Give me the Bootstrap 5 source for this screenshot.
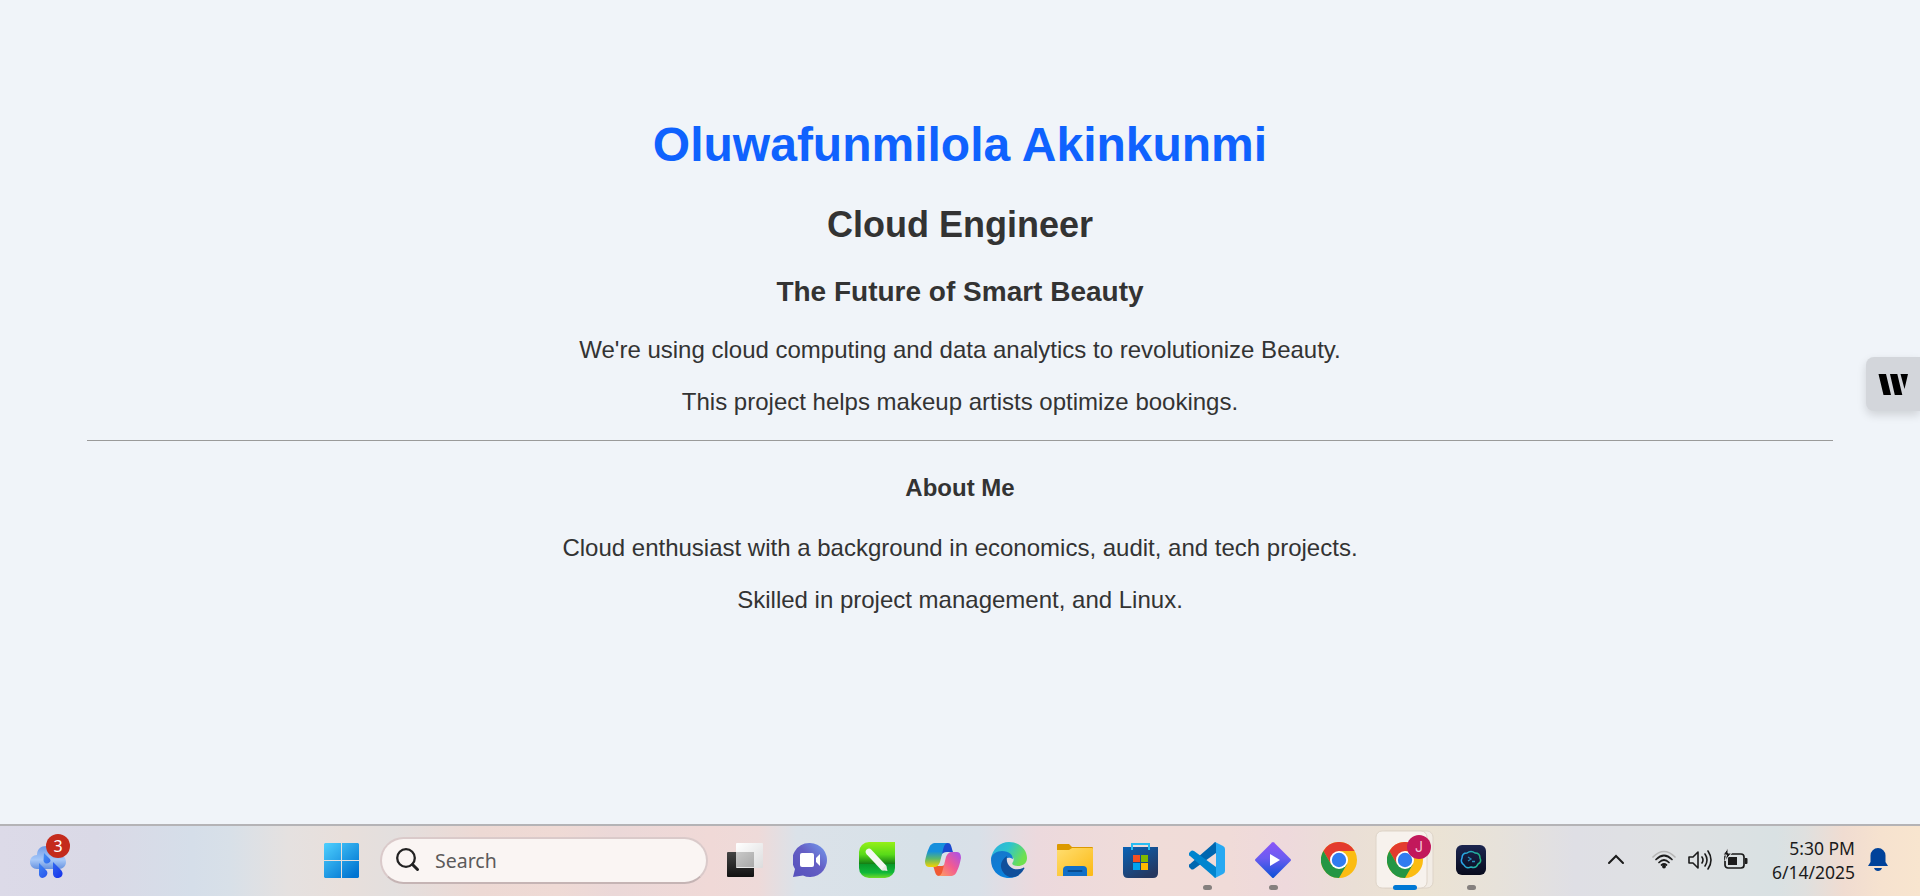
<!DOCTYPE html>
<html lang="en">
<head>
<meta charset="utf-8">
<title>Oluwafunmilola Akinkunmi</title>
<link href="https://cdn.jsdelivr.net/npm/bootstrap@5.3.0/dist/css/bootstrap.min.css" rel="stylesheet">
<style>
body{background:#f0f4f9;color:#333;font-family:"Liberation Sans",Arial,sans-serif;font-size:24px;line-height:27px;height:896px;overflow:hidden}
.page{padding:118px 87px 0}
.page p{margin:0 0 25px}
.page h1{font-size:48px;font-weight:700;line-height:54px;color:#0f62fe;margin:0 0 32px}
.page h2{font-size:36px;font-weight:700;line-height:42px;margin:0 0 29px}
.page h3{font-size:28px;font-weight:700;line-height:33px;margin:0 0 28px}
.page h4{font-size:24px;font-weight:700;line-height:27px;margin:0 0 33px}
.page hr{margin:0 0 33px;border-top:1px solid #9a9a9a;opacity:1}
.side-tab{right:0;top:357px;width:54px;height:54px;background:#d3d6db;border-radius:8px 0 0 8px;box-shadow:0 4px 10px rgba(0,0,0,.14)}
.taskbar{height:72px;padding-bottom:2px;border-top:2px solid #b4b3b6;font-family:"Noto Sans","Open Sans",sans-serif;color:#1b1b1b;background:linear-gradient(90deg,#dcdae8 0,#dad9e6 5%,#d5dee9 10%,#d8e0e8 12%,#e5e1e0 15%,#e8dfdb 18%,#e3dfde 20.5%,#edd9d4 25%,#efdad5 29%,#ebd8d8 32%,#f0d9d7 37%,#eedad9 39.5%,#dbe2e9 41.5%,#d7e1e8 48%,#d9e0e8 51%,#ecd9dd 54%,#f0dcd8 60%,#f0dbd8 64%,#eed9dc 67%,#eadfd6 70.5%,#ece3d3 74%,#e7e2da 78%,#dfdfe5 82%,#dfe1e3 87%,#d9e1e3 92.5%,#dfe0df 94%,#f0dcd1 96%,#f6e2cf 98%,#f8e5cf 100%)}
.task-ic{width:36px;height:36px;display:block}
.slot{width:66px}
.searchbox{width:328px;height:47px;border-radius:24px;background:#faf5f3;border:2px solid #dacaca;border-bottom-color:#c5b4b4;color:#5c5a5a;font-size:19.5px}
.weather-badge{left:16px;top:-8px;width:24px;height:24px;background:#c42b1c;color:#fff;font-size:16px;line-height:24px}
.run-dot{bottom:-12px;left:29px;width:9px;height:5px;border-radius:3px;background:#85807e}
.run-dot.on{left:20px;width:24px;background:#0078d4}
.avatar-dot{top:-7px;width:24px;height:24px;background:#c2185b;color:#f4c4d8;font-family:Inter,sans-serif;font-size:14px;line-height:24px}
.clock{font-size:17.5px;line-height:24px}
</style>
</head>
<body class="d-flex flex-column">
<main class="page text-center flex-grow-1">
<h1>Oluwafunmilola Akinkunmi</h1>
<h2>Cloud Engineer</h2>
<h3>The Future of Smart Beauty</h3>
<p>We're using cloud computing and data analytics to revolutionize Beauty.</p>
<p>This project helps makeup artists optimize bookings.</p>
<hr>
<h4>About Me</h4>
<p>Cloud enthusiast with a background in economics, audit, and tech projects.</p>
<p>Skilled in project management, and Linux.</p>
</main>
<aside class="side-tab position-absolute">
<svg class="d-block" width="54" height="54" viewBox="0 0 54 54"><path d="M12.500 17h7.500l5 21h-7.500zM24 17h7.300l5 21h-7.500zM34.500 17H42l-3.500 15z"/></svg>
</aside>
<footer class="taskbar d-flex align-items-center flex-shrink-0">
<div class="position-relative" style="margin-left:30px">
<svg class="task-ic" viewBox="0 0 36 36"><defs><linearGradient id="cl" x2="0" y2="1"><stop stop-color="#6d9bea"/><stop offset=".6" stop-color="#a7c8f8"/><stop offset="1" stop-color="#6792df"/></linearGradient><linearGradient id="dr" x2="1" y2="1"><stop stop-color="#4a9cf5"/><stop offset="1" stop-color="#1630ea"/></linearGradient></defs><path fill="url(#cl)" d="M7 13C7 7 11 4 16 4c6 0 9 4 10 9 6-1 10 2 10 7 0 4-3 7-7 7H7c-4 0-7-3-7-7s3-7 7-7z"/><path fill="url(#dr)" d="M14 11l5.500 5.500c4 4-5 8-6 2zM9 21l7 7c5 5-5 12-7 5zM23 20l8 8c6 7-7 12-8 4z"/></svg>
<span class="weather-badge position-absolute rounded-circle text-center">3</span>
</div>
<div style="margin-left:258px"><svg class="task-ic" viewBox="0 0 36 36"><defs><linearGradient id="wn" gradientUnits="userSpaceOnUse" x2="30" y2="34"><stop stop-color="#50d2ff"/><stop offset="1" stop-color="#0074d1"/></linearGradient></defs><path fill="url(#wn)" d="M1 1h16v17H0V2zM18 1h16l1 1v16H18zM0 19h17v17H1l-1-1zM18 19h17v16l-1 1H18z"/></svg></div>
<div class="searchbox d-flex align-items-center" style="margin-left:20px">
<svg width="24" height="24" viewBox="0 0 24 24" fill="none" stroke="#222" stroke-width="2.300" style="margin-left:14px"><circle cx="10" cy="10" r="8.800"/><path stroke-width="3" stroke-linecap="round" d="M16.500 16.500l5 5"/></svg>
<span style="margin-left:15px">Search</span></div>
<nav class="d-flex" style="margin-left:19px">
<div class="slot"><svg class="task-ic" viewBox="0 0 36 36"><defs><linearGradient id="tk" x2="0" y2="1"><stop stop-color="#444"/><stop offset="1" stop-color="#111"/></linearGradient><linearGradient id="tw" x2="1" y2="1"><stop stop-color="#fff"/><stop offset="1" stop-color="#dcdcdd"/></linearGradient><linearGradient id="to" x2="1" y2="1"><stop stop-color="#c9c9c9"/><stop offset="1" stop-color="#a9a9a9"/></linearGradient></defs><rect y="10" width="27" height="25" rx="1" fill="url(#tk)"/><rect x="9" y="1" width="27" height="25" rx="1" fill="url(#tw)"/><path fill="url(#to)" d="M9 10h18v15H9z"/></svg></div>
<div class="slot"><svg class="task-ic" viewBox="0 0 36 36"><defs><linearGradient id="ch" x1="1" x2="0" y2="1"><stop stop-color="#749ff0"/><stop offset=".45" stop-color="#655fc5"/><stop offset="1" stop-color="#5550bb"/></linearGradient></defs><path fill="url(#ch)" d="M17 1a17 17 0 1 1-7 32.500L0 35l2-8A17 17 0 0 1 17 1z"/><rect x="7" y="11" width="14" height="14" rx="2" fill="#fff"/><path fill="#fff" d="M23 16l4-4v12l-4-4z"/></svg></div>
<div class="slot"><svg class="task-ic" viewBox="0 0 36 36"><defs><linearGradient id="gn" x2="0" y2="1"><stop stop-color="#96f017"/><stop offset=".35" stop-color="#58da19"/><stop offset=".6" stop-color="#168115"/><stop offset=".62" stop-color="#099a29"/><stop offset=".85" stop-color="#10b83a"/><stop offset="1" stop-color="#70dc28"/></linearGradient></defs><path fill="url(#gn)" d="M10 0h26v26a10 10 0 0 1-10 10H10A10 10 0 0 1 0 26V10A10 10 0 0 1 10 0z"/><path stroke="#f4f7f3" stroke-width="6.500" stroke-linecap="round" d="M10 10l14 15"/><path fill="#e5e8e5" d="M22 28l5-5 1.500 6z"/></svg></div>
<div class="slot"><svg class="task-ic" viewBox="0 0 36 36"><defs><linearGradient id="c1" x2="0" y2="1"><stop stop-color="#168fdc"/><stop offset=".35" stop-color="#168fdc"/><stop offset=".65" stop-color="#5bb76d"/><stop offset="1" stop-color="#f5d300"/></linearGradient><linearGradient id="c2" x1="1" x2="0" y2="1"><stop stop-color="#a650ee"/><stop offset=".5" stop-color="#f25b91"/><stop offset="1" stop-color="#ffa35c"/></linearGradient></defs><path fill="#1b49cf" d="M18 1h5c3 0 3 3 5 9h-6c-3 0-5 1-6 4z"/><path fill="#f05a34" d="M8 24h8c3 0 5-2 5-5l-3 11c-1 3-2 4-4 4-4 0-4-6-6-10z"/><path fill="url(#c1)" d="M11 1h12c-3 0-4 3-5 7l-3 12c-1 3-3 5-6 5H4c-3 0-4-3-4-6 1-5 2-9 4-13 1-3 3-5 7-5z"/><path fill="url(#c2)" d="M25 34H13c3 0 4-3 5-7l3-12c1-3 3-5 6-5h5c3 0 4 3 4 6-1 5-2 9-4 13-1 3-3 5-7 5z"/></svg></div>
<div class="slot"><svg class="task-ic" viewBox="0 0 36 36"><defs><linearGradient id="e1" x2="1" y2=".4"><stop stop-color="#2baee2"/><stop offset=".5" stop-color="#2ec4cd"/><stop offset="1" stop-color="#6ee04f"/></linearGradient><linearGradient id="e2" x2=".5" y2="1"><stop stop-color="#1676c9"/><stop offset="1" stop-color="#0a82de"/></linearGradient></defs><path fill="url(#e1)" d="M0 17C1 7 9 0 18 0c11 0 18 8 18 16 0 6-5 8-9 8-5 0-7-2-5-4 2-4-1-7-5-7z"/><path fill="url(#e2)" d="M0 18C0 12 6 9 11 9c7 0 11 4 11 8-7-4-11 2-6 10 3 4 8 5 12 6-4 3-9 3-12 3C7 35 0 28 0 18z"/><path fill="#104f9b" d="M16 14c-6 4-8 10-4 16 4 7 15 8 21-3 1-1 0-2-1-1-8 4-18-1-16-12z"/></svg></div>
<div class="slot"><svg class="task-ic" viewBox="0 0 36 36"><defs><linearGradient id="fo" x2="1" y2="1"><stop stop-color="#ffde70"/><stop offset="1" stop-color="#fcb914"/></linearGradient></defs><path fill="#dc9900" d="M0 3q0-1 1-1h11l3 3h20q1 0 1 1v8H0z"/><path fill="url(#fo)" d="M0 8h12l3-2h20q1 0 1 1v26q0 1-1 1H0z"/><path fill="#116fc7" d="M6 34v-6q0-4 4-4h16q4 0 4 4v6z"/><path stroke="#074b90" stroke-width="2" stroke-linecap="round" d="M11.500 29h13"/></svg></div>
<div class="slot"><svg class="task-ic" viewBox="0 0 36 36"><defs><linearGradient id="st" x2=".6" y2="1"><stop stop-color="#0862b6"/><stop offset="1" stop-color="#253861"/></linearGradient></defs><path fill="url(#st)" d="M0 5h35v26q0 5-5 5H5q-5 0-5-5z"/><path fill="none" stroke="#28bcf2" stroke-width="2" d="M9 8V2h17v6"/><path fill="#f25022" d="M10 13h7v7h-7z"/><path fill="#7fba00" d="M18 13h7v7h-7z"/><path fill="#00a4ef" d="M10 21h7v7h-7z"/><path fill="#ffb900" d="M18 21h7v7h-7z"/></svg></div>
<div class="slot position-relative"><svg class="task-ic" viewBox="0 0 36 36"><path fill="#0067b0" d="M0 25l2 2q1 1 3 0L27 11V0q-2 0-3 2L1 22q-2 1-1 3z"/><path fill="#0085cf" d="M0 11l2-2q1-1 3 0l22 16v11q-2 0-3-2L1 14q-2-1-1-3z"/><path fill="#27a9f2" d="M26 0l8 4q2 1 2 3v22q0 2-2 3l-8 4q1-1 1-3V3q0-2-1-3z"/></svg><span class="run-dot position-absolute" style="left:14px"></span></div>
<div class="slot position-relative"><svg class="task-ic" viewBox="0 0 36 36"><defs><linearGradient id="di" x2="0" y2="1"><stop stop-color="#8b55f8"/><stop offset=".45" stop-color="#6b5cf1"/><stop offset="1" stop-color="#0b51d6"/></linearGradient></defs><path fill="url(#di)" d="M17 .5q1-1 2 0L35.500 17q1 1 0 2L19 35.500q-1 1-2 0L.5 19q-1-1 0-2z"/><path fill="#fff" d="M15 12l10 6-10 6z"/></svg><span class="run-dot position-absolute" style="left:14px"></span></div>
<div class="slot"><svg class="task-ic" viewBox="0 0 36 36"><g id="chrome"><circle cx="18" cy="18" r="18" fill="#fbbc12"/><path fill="#e33b2e" d="M2.400 9A18 18 0 0 1 33.600 9H18l-7.800 13.500z"/><path fill="#249644" d="M2.400 9A18 18 0 0 0 18 36l7.800-13.500H10.200z"/><circle cx="18" cy="18" r="9" fill="#fff"/><circle cx="18" cy="18" r="7.200" fill="#307cf0"/></g></svg></div>
<div class="slot position-relative"><svg class="position-absolute" style="left:-12px;top:-12px" width="60" height="60" viewBox="0 0 60 60"><rect x="5" y="1" width="53" height="57" rx="6" fill="#f2ece5" stroke="#ded4c8"/><rect x="1" y="1" width="51" height="57" rx="6" fill="#f7f2ed" stroke="#ded4c8"/></svg><svg class="task-ic position-relative" viewBox="0 0 36 36"><use href="#chrome"/></svg><span class="avatar-dot position-absolute rounded-circle text-center" style="left:20px">J</span><span class="run-dot on position-absolute" style="left:6px"></span></div>
<div class="slot position-relative"><svg class="task-ic" viewBox="0 0 36 36"><defs><linearGradient id="tm" x2="0" y2="1"><stop stop-color="#1c2650"/><stop offset="1" stop-color="#080b1d"/></linearGradient><linearGradient id="tl"><stop stop-color="#2aa6f2"/><stop offset="1" stop-color="#20b681"/></linearGradient></defs><rect x="3" y="3" width="30" height="30" rx="6" fill="url(#tm)"/><path fill="none" stroke="url(#tl)" stroke-width="1.500" d="M14 11q4-3 8 0 5 0 5 5 2 4-2 6-2 5-7 3-5 2-7-2-4-3-2-7 0-5 5-5z"/><path fill="none" stroke="#278dba" stroke-width="1.300" d="M15 15l3 2-3 2M19 19.500h3"/></svg><span class="run-dot position-absolute" style="left:14px"></span></div>
</nav>
<div class="d-flex align-items-center ms-auto" style="margin-right:32px">
<svg width="18" height="12" viewBox="0 0 18 12" fill="none" stroke="#1b1b1b" stroke-width="2" stroke-linecap="round" style="margin-right:27px"><path d="M2 9l7-7 7 7"/></svg>
<svg width="24" height="20" viewBox="0 0 24 20" fill="none" stroke="#1b1b1b" stroke-width="1.700" stroke-linecap="round"><path stroke="#b6b6b6" d="M1 7Q12-4 23 7"/><path d="M4 9.500q8-8 16 0M7 12.500q5-5 10 0M9.500 15q2.500-2 5 0"/><circle cx="12" cy="16.500" r="1.900" fill="#1b1b1b" stroke="none"/></svg>
<svg width="26" height="22" viewBox="0 0 26 22" fill="none" stroke="#1b1b1b" stroke-width="1.600" stroke-linecap="round" stroke-linejoin="round" style="margin-left:11px"><path d="M2 8h4l5-5v16l-5-5H2zM15 8q2 3 0 6M18 5q4 6 0 12M21 2q6 9 0 18"/></svg>
<svg width="25" height="22" viewBox="0 0 25 22" overflow="visible" style="margin-left:10px"><rect x="2" y="5" width="19" height="14" rx="3" fill="none" stroke="#1b1b1b" stroke-width="1.700"/><path fill="#1b1b1b" d="M5 8h9v8H5zM22 9h1.500q1 0 1 1v4q0 1-1 1H22z"/><path fill="#1b1b1b" stroke="#dfe2e4" d="M5-1L0 6h3.500l-1.500 6 6.500-8H5z"/></svg>
<div class="clock text-end" style="margin-left:24px">5:30 PM<br>6/14/2025</div>
<svg width="20" height="24" viewBox="0 0 20 24" style="margin-left:13px"><path fill="#00429a" d="M10 0a7.500 7.500 0 0 1 7.500 7.500V14l2.500 4H0l2.500-4V7.500A7.500 7.500 0 0 1 10 0zM6 20h8q-1 3-4 3t-4-3z"/></svg>
</div>
</footer>
<script src="https://cdn.jsdelivr.net/npm/bootstrap@5.3.0/dist/js/bootstrap.bundle.min.js"></script>
</body>
</html>
